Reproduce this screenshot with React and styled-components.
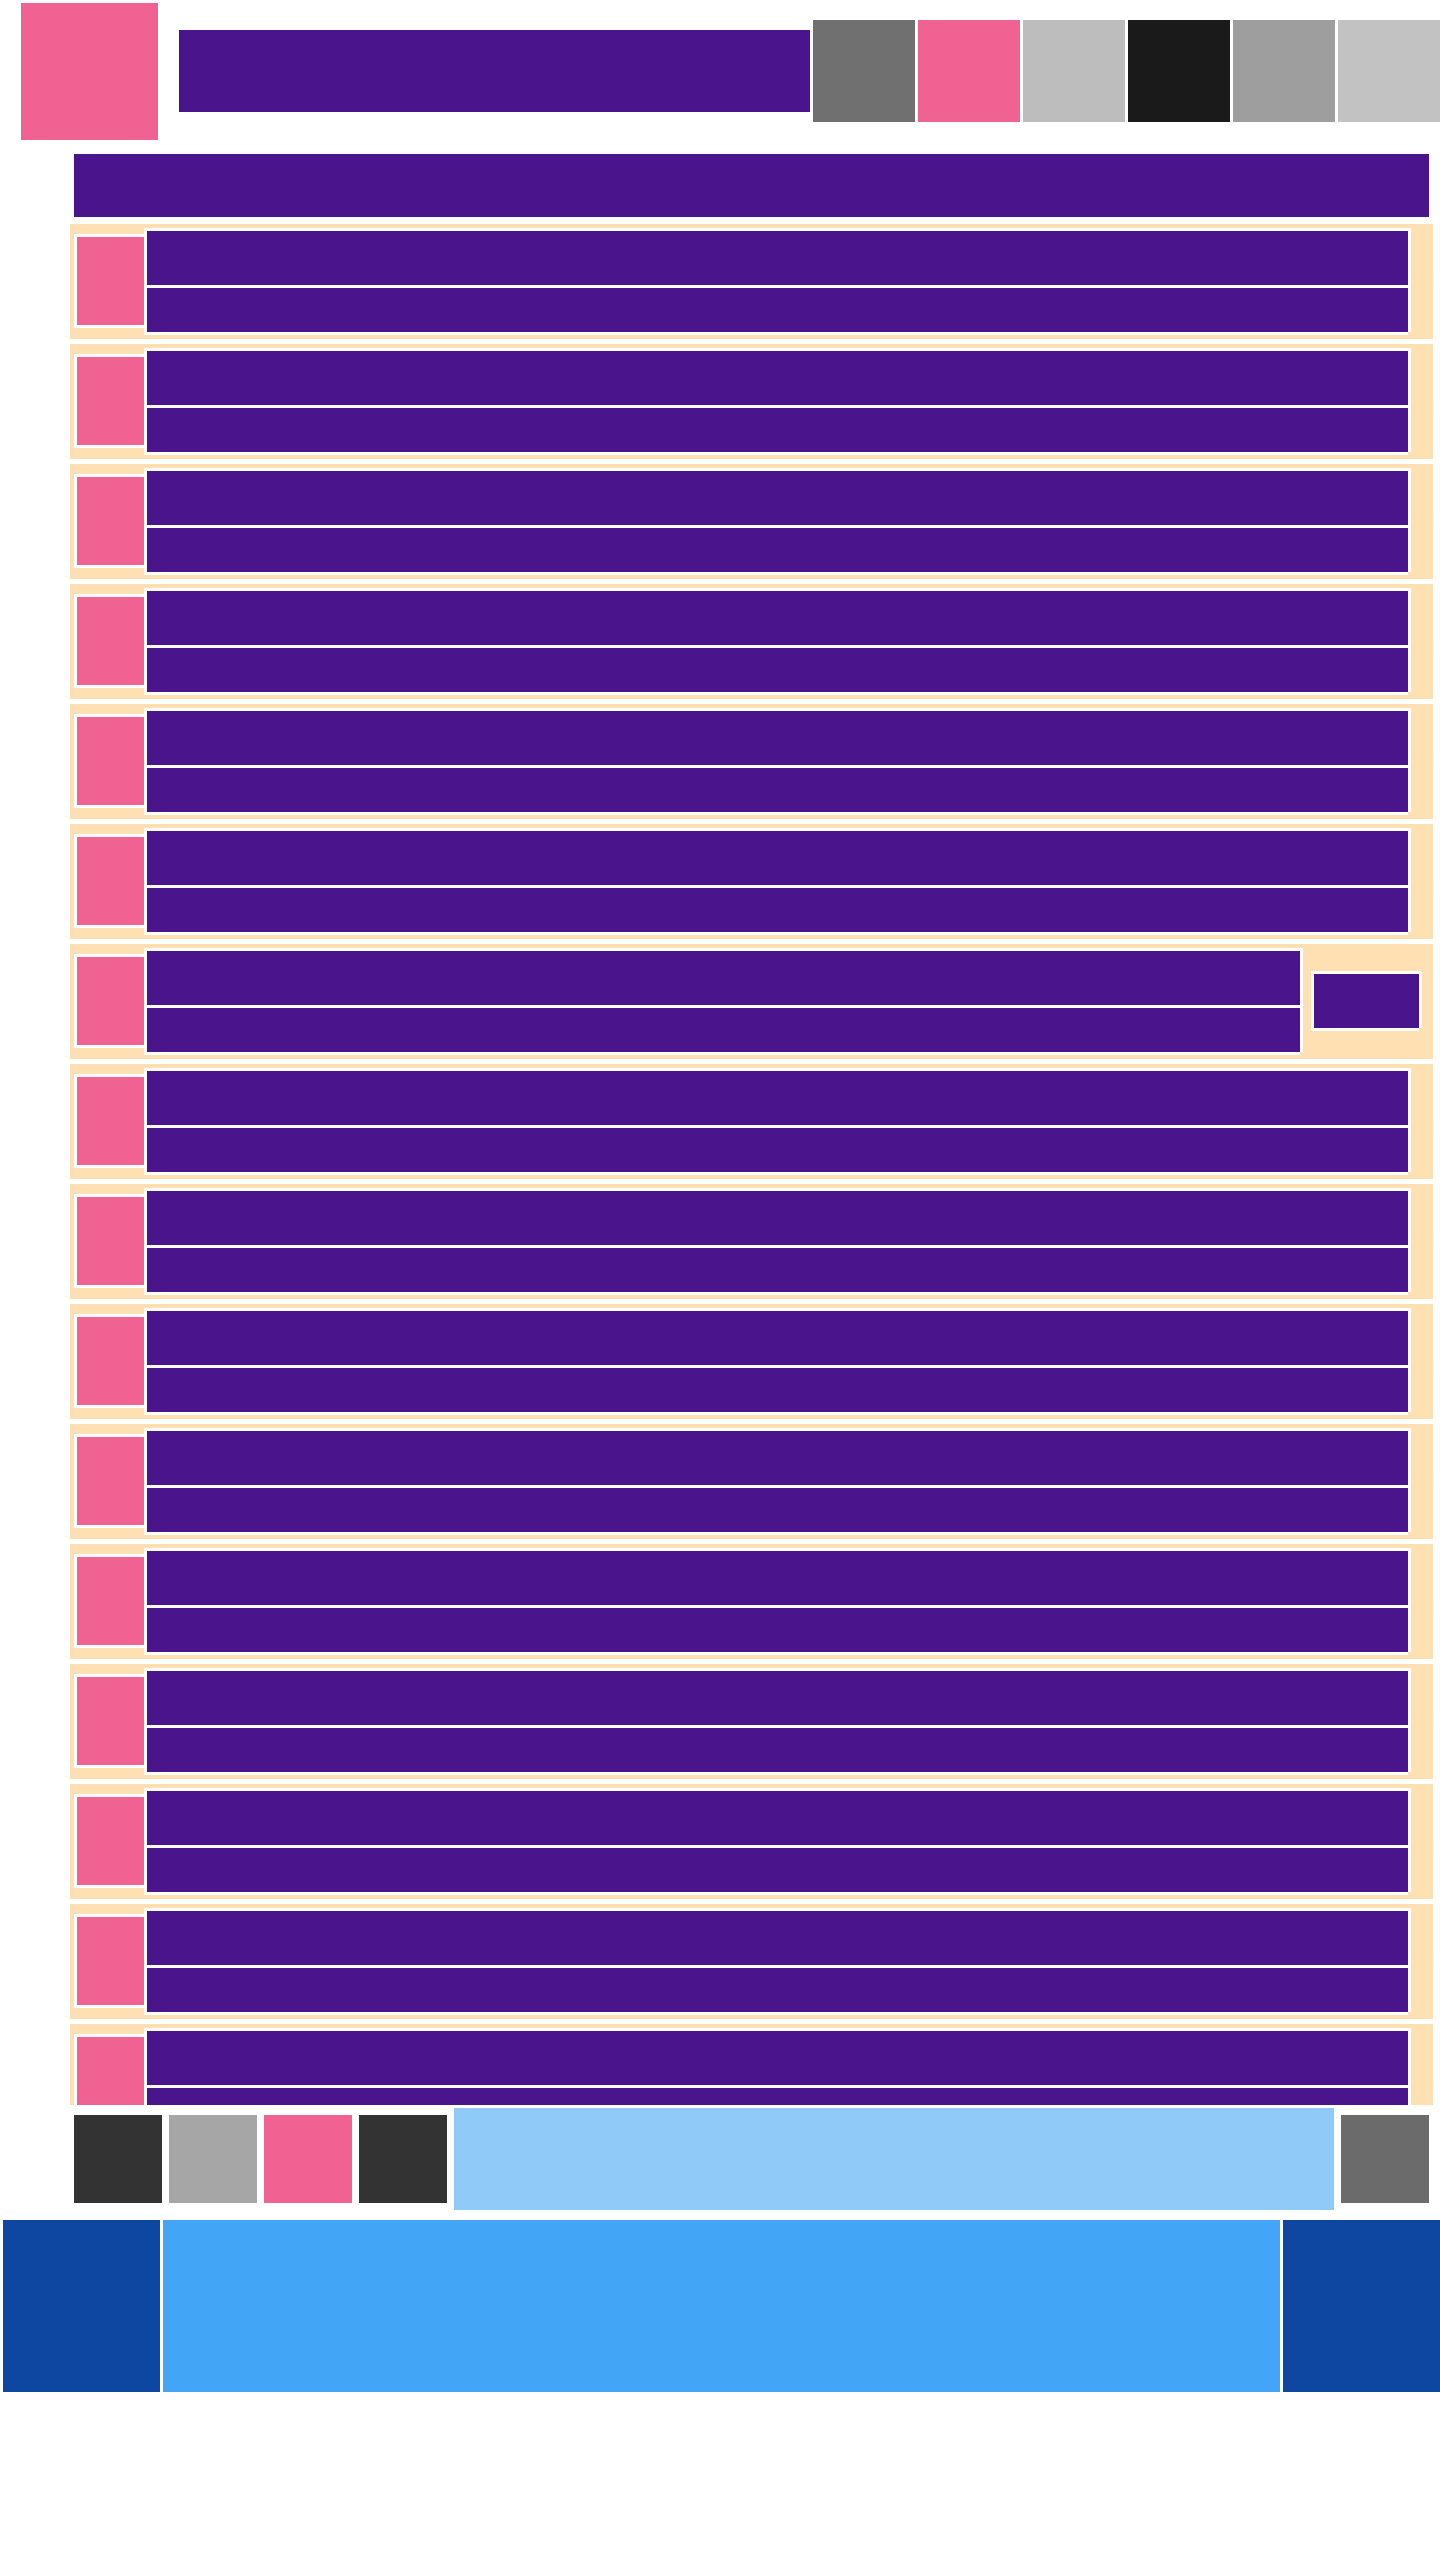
import React from "react";
import styled, { createGlobalStyle } from "styled-components";

const Global = createGlobalStyle`
  html, body { margin: 0; padding: 0; background: #fff; }
`;

const PINK = "#f06292";
const PURPLE = "#4a148c";

const Page = styled.div`
  width: 1440px;
  display: flex;
  flex-direction: column;
`;

const Header = styled.header`
  display: flex;
  align-items: flex-start;
  height: 154px;
  padding-left: 21px;
`;

const Logo = styled.div`
  width: 137px;
  height: 137px;
  margin-top: 3px;
  background: ${PINK};
`;

const Title = styled.div`
  width: 631px;
  height: 82px;
  margin: 30px 0 0 21px;
  background: ${PURPLE};
`;

const Actions = styled.div`
  display: flex;
  gap: 3px;
  margin: 20px 0 0 3px;
`;

const ActionTile = styled.div`
  width: 102px;
  height: 102px;
  background: ${(p) => p.$color};
`;

const Heading = styled.div`
  height: 63px;
  margin: 0 11px 7px 74px;
  background: ${PURPLE};
`;

const List = styled.div`
  height: 1881px;
  margin: 0 7px 0 70px;
  overflow: hidden;
  display: flex;
  flex-direction: column;
  gap: 5px;
`;

const Row = styled.div`
  flex: none;
  height: 115px;
  display: flex;
  align-items: flex-start;
  background: #ffe0b2;
  padding-left: 4px;
`;

const Thumb = styled.div`
  flex: none;
  width: 67px;
  height: 88px;
  margin-top: 10px;
  border: 3px solid #fff;
  border-right: 0;
  background: ${PINK};
  background-clip: padding-box;
`;

const notch = `polygon(0 0, 100% 0, 100% calc(100% - 3px), calc(100% - 3px) calc(100% - 3px), calc(100% - 3px) 100%, 0 100%)`;

const TextStack = styled.div`
  flex: none;
  width: ${(p) => p.$width}px;
  height: 107px;
  margin-top: 4px;
  padding: 3px;
  box-sizing: border-box;
  display: flex;
  flex-direction: column;
  gap: 3px;
  background: #fff;
  clip-path: ${notch};
`;

const Name = styled.div`
  height: 54px;
  background: ${PURPLE};
`;

const Meta = styled.div`
  height: 44px;
  background: ${PURPLE};
`;

const RowAction = styled.div`
  flex: none;
  width: 105px;
  height: 54px;
  margin: 27px 0 0 8px;
  border: 3px solid #fff;
  background: ${PURPLE};
  background-clip: padding-box;
  clip-path: ${notch};
`;

const Footer = styled.div`
  display: flex;
  align-items: center;
  height: 102px;
  margin-top: 3px;
  padding-left: 74px;
`;

const FooterTile = styled.div`
  flex: none;
  width: 88px;
  height: 88px;
  margin-right: 7px;
  background: ${(p) => p.$color};
`;

const Field = styled.div`
  flex: none;
  width: 880px;
  height: 102px;
  margin-right: 7px;
  background: #90caf9;
`;

const Player = styled.div`
  display: flex;
  gap: 3px;
  height: 172px;
  margin-top: 10px;
  padding-left: 3px;
`;

const PlayerSide = styled.div`
  flex: none;
  width: 157px;
  background: #0d47a1;
`;

const PlayerMain = styled.div`
  flex: 1;
  background: #42a5f5;
`;

const actionColors = ["#707070", PINK, "#bdbdbd", "#1a1a1a", "#9e9e9e", "#c2c2c2"];
const rows = Array.from({ length: 16 }, (_, i) => i);

export default function App() {
  return (
    <Page>
      <Global />
      <Header>
        <Logo />
        <Title />
        <Actions>
          {actionColors.map((c, i) => (
            <ActionTile key={i} $color={c} />
          ))}
        </Actions>
      </Header>
      <Heading />
      <List>
        {rows.map((i) => (
          <Row key={i}>
            <Thumb />
            <TextStack $width={i === 6 ? 1159 : 1267}>
              <Name />
              <Meta />
            </TextStack>
            {i === 6 && <RowAction />}
          </Row>
        ))}
      </List>
      <Footer>
        <FooterTile $color="#333333" />
        <FooterTile $color="#a6a6a6" />
        <FooterTile $color={PINK} />
        <FooterTile $color="#333333" />
        <Field />
        <FooterTile $color="#6b6b6b" />
      </Footer>
      <Player>
        <PlayerSide />
        <PlayerMain />
        <PlayerSide />
      </Player>
    </Page>
  );
}
